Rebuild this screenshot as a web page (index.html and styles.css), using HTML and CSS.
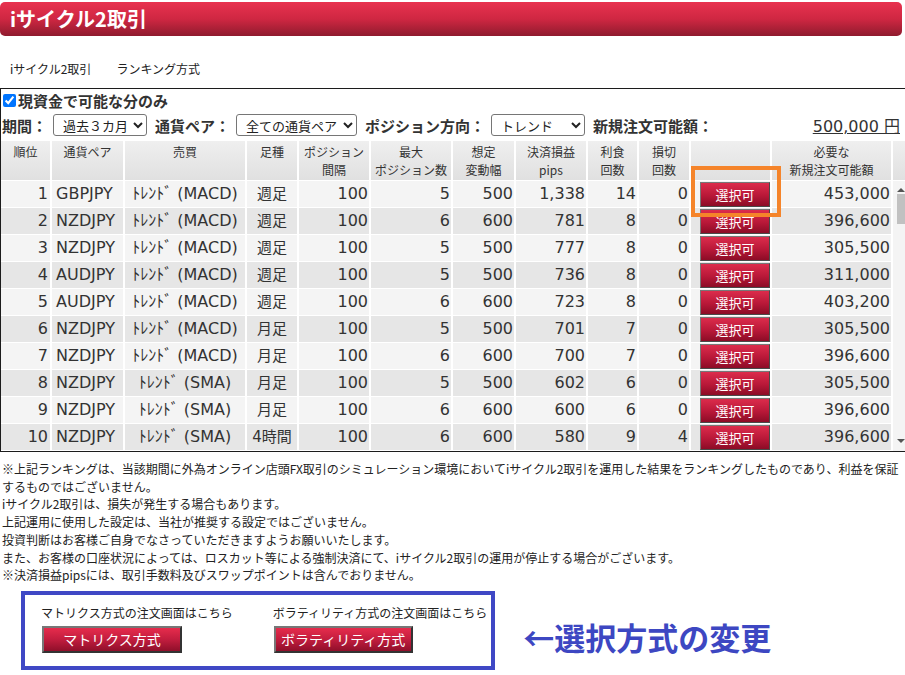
FILE: index.html
```html
<!DOCTYPE html>
<html lang="ja">
<head>
<meta charset="utf-8">
<title>iサイクル2取引</title>
<link rel="stylesheet" href="styles.css">
</head>
<body>
<header class="title-bar"><h1>iサイクル2取引</h1></header>
<nav class="tabs"><span>iサイクル2取引</span><span>ランキング方式</span></nav>

<section class="panel">
  <label class="only-cash"><input type="checkbox" checked>現資金で可能な分のみ</label>
  <div class="filters">
    <span>期間：</span>
    <select class="sel-period"><option>過去３カ月</option></select>
    <span>通貨ペア：</span>
    <select class="sel-pair"><option>全ての通貨ペア</option></select>
    <span>ポジション方向：</span>
    <select class="sel-dir"><option>トレンド</option></select>
    <span>新規注文可能額：</span>
    <span class="amount">500,000 円</span>
  </div>

  <table class="ranking">
    <thead>
      <tr>
        <th class="w-rank">順位</th>
        <th class="w-pair">通貨ペア</th>
        <th class="w-side">売買</th>
        <th class="w-bar">足種</th>
        <th class="w-int">ポジション<br>間隔</th>
        <th class="w-max">最大<br>ポジション数</th>
        <th class="w-range">想定<br>変動幅</th>
        <th class="w-pips">決済損益<br>pips</th>
        <th class="w-tp">利食<br>回数</th>
        <th class="w-sl">損切<br>回数</th>
        <th class="w-btn"></th>
        <th class="w-need">必要な<br>新規注文可能額</th>
        <th class="w-scroll"></th>
      </tr>
    </thead>
    <tbody>
      <tr>
        <td class="rank">1</td><td class="pair">GBPJPY</td><td class="side">ﾄﾚﾝﾄﾞ (MACD)</td><td class="bar">週足</td>
        <td>100</td><td>5</td><td>500</td><td>1,338</td><td>14</td><td>0</td>
        <td class="sel"><button class="pick">選択可</button></td><td>453,000</td>
        <td class="scroll" rowspan="10"><div class="sb"><span class="sb-up"></span><span class="sb-thumb"></span><span class="sb-down"></span></div></td>
      </tr>
      <tr>
        <td class="rank">2</td><td class="pair">NZDJPY</td><td class="side">ﾄﾚﾝﾄﾞ (MACD)</td><td class="bar">週足</td>
        <td>100</td><td>6</td><td>600</td><td>781</td><td>8</td><td>0</td>
        <td class="sel"><button class="pick">選択可</button></td><td>396,600</td>
      </tr>
      <tr>
        <td class="rank">3</td><td class="pair">NZDJPY</td><td class="side">ﾄﾚﾝﾄﾞ (MACD)</td><td class="bar">週足</td>
        <td>100</td><td>5</td><td>500</td><td>777</td><td>8</td><td>0</td>
        <td class="sel"><button class="pick">選択可</button></td><td>305,500</td>
      </tr>
      <tr>
        <td class="rank">4</td><td class="pair">AUDJPY</td><td class="side">ﾄﾚﾝﾄﾞ (MACD)</td><td class="bar">週足</td>
        <td>100</td><td>5</td><td>500</td><td>736</td><td>8</td><td>0</td>
        <td class="sel"><button class="pick">選択可</button></td><td>311,000</td>
      </tr>
      <tr>
        <td class="rank">5</td><td class="pair">AUDJPY</td><td class="side">ﾄﾚﾝﾄﾞ (MACD)</td><td class="bar">週足</td>
        <td>100</td><td>6</td><td>600</td><td>723</td><td>8</td><td>0</td>
        <td class="sel"><button class="pick">選択可</button></td><td>403,200</td>
      </tr>
      <tr>
        <td class="rank">6</td><td class="pair">NZDJPY</td><td class="side">ﾄﾚﾝﾄﾞ (MACD)</td><td class="bar">月足</td>
        <td>100</td><td>5</td><td>500</td><td>701</td><td>7</td><td>0</td>
        <td class="sel"><button class="pick">選択可</button></td><td>305,500</td>
      </tr>
      <tr>
        <td class="rank">7</td><td class="pair">NZDJPY</td><td class="side">ﾄﾚﾝﾄﾞ (MACD)</td><td class="bar">月足</td>
        <td>100</td><td>6</td><td>600</td><td>700</td><td>7</td><td>0</td>
        <td class="sel"><button class="pick">選択可</button></td><td>396,600</td>
      </tr>
      <tr>
        <td class="rank">8</td><td class="pair">NZDJPY</td><td class="side">ﾄﾚﾝﾄﾞ (SMA)</td><td class="bar">月足</td>
        <td>100</td><td>5</td><td>500</td><td>602</td><td>6</td><td>0</td>
        <td class="sel"><button class="pick">選択可</button></td><td>305,500</td>
      </tr>
      <tr>
        <td class="rank">9</td><td class="pair">NZDJPY</td><td class="side">ﾄﾚﾝﾄﾞ (SMA)</td><td class="bar">月足</td>
        <td>100</td><td>6</td><td>600</td><td>600</td><td>6</td><td>0</td>
        <td class="sel"><button class="pick">選択可</button></td><td>396,600</td>
      </tr>
      <tr>
        <td class="rank">10</td><td class="pair">NZDJPY</td><td class="side">ﾄﾚﾝﾄﾞ (SMA)</td><td class="bar">4時間</td>
        <td>100</td><td>6</td><td>600</td><td>580</td><td>9</td><td>4</td>
        <td class="sel"><button class="pick">選択可</button></td><td>396,600</td>
      </tr>
    </tbody>
  </table>
  <div class="highlight"></div>
</section>

<div class="notes">
  <p>※上記ランキングは、当該期間に外為オンライン店頭FX取引のシミュレーション環境においてiサイクル2取引を運用した結果をランキングしたものであり、利益を保証するものではございません。</p>
  <p>iサイクル2取引は、損失が発生する場合もあります。</p>
  <p>上記運用に使用した設定は、当社が推奨する設定ではございません。</p>
  <p>投資判断はお客様ご自身でなさっていただきますようお願いいたします。</p>
  <p>また、お客様の口座状況によっては、ロスカット等による強制決済にて、iサイクル2取引の運用が停止する場合がございます。</p>
  <p>※決済損益pipsには、取引手数料及びスワップポイントは含んでおりません。</p>
</div>

<div class="switch-row">
  <div class="switch-box">
    <div class="switch-group">
      <div class="switch-label">マトリクス方式の注文画面はこちら</div>
      <button class="mode-btn w140">マトリクス方式</button>
    </div>
    <div class="switch-group">
      <div class="switch-label">ボラティリティ方式の注文画面はこちら</div>
      <button class="mode-btn w139">ボラティリティ方式</button>
    </div>
  </div>
  <div class="annotation">←選択方式の変更</div>
</div>
</body>
</html>
```

FILE: styles.css
```css
html, body {
  margin: 0;
  padding: 0;
  background: #fff;
}
body {
  width: 905px;
  overflow: hidden;
  font-family: "Noto Sans CJK JP", sans-serif;
  color: #333;
}

.title-bar {
  margin: 2px 3px 0 0;
  height: 34px;
  border-radius: 5px;
  background: linear-gradient(#e8324f, #cf2742 50%, #8f1b2e);
}
.title-bar h1 {
  margin: 0;
  padding-left: 10px;
  font-size: 20px;
  line-height: 34px;
  font-weight: 700;
  color: #fff;
}

.tabs {
  display: flex;
  gap: 25px;
  padding: 24px 0 10px 10px;
  font-size: 12px;
  line-height: 18px;
  color: #222;
}

.panel {
  position: relative;
  border: 1px solid #1c1c1c;
  border-right: 0;
}

.only-cash {
  display: flex;
  align-items: center;
  height: 22px;
  font-size: 15px;
  font-weight: 700;
  color: #333;
}
.only-cash input {
  width: 13px;
  height: 13px;
  margin: 0 2px 0 2px;
}

.filters {
  display: flex;
  align-items: center;
  height: 24px;
  margin: 2px 0 4px;
  padding-left: 1px;
  font-size: 15px;
  font-weight: 700;
  color: #333;
}
.filters select {
  height: 22px;
  margin: 0 8px 0 6px;
  padding: 0 0 0 5px;
  border: 1px solid #767676;
  border-radius: 3px;
  background: #fff;
  font-family: "Noto Sans CJK JP", sans-serif;
  font-size: 13px;
  color: #222;
}
.sel-period { width: 94px; }
.sel-pair { width: 121px; }
.sel-dir { width: 94px; }
.amount {
  margin-left: auto;
  padding-right: 5px;
  font-family: "DejaVu Sans", "Noto Sans CJK JP", sans-serif;
  font-weight: 400;
  font-size: 16px;
  text-decoration: underline;
  color: #333;
}

.ranking {
  width: 904px;
  table-layout: fixed;
  border-collapse: separate;
  border-spacing: 0;
}
.ranking th {
  box-sizing: border-box;
  height: 39px;
  padding: 2px 0 1px;
  vertical-align: top;
  text-align: center;
  font-size: 12px;
  font-weight: 400;
  line-height: 18px;
  color: #333;
  background: linear-gradient(#efefef, #e0e0e0);
  border-right: 2px solid #fff;
  border-bottom: 1px solid #fff;
  white-space: nowrap;
}
.w-rank { width: 51px; }
.w-pair { width: 73px; }
.w-side { width: 122px; }
.w-bar { width: 52px; }
.w-int { width: 72px; }
.w-max { width: 82px; }
.w-range { width: 63px; }
.w-pips { width: 72px; }
.w-tp { width: 51px; }
.w-sl { width: 52px; }
.w-btn { width: 81px; }
.w-need { width: 121px; }
.ranking th.w-scroll { width: 12px; border-right: 0; }

.ranking td {
  box-sizing: border-box;
  height: 27px;
  padding: 0 1px 0 0;
  text-align: right;
  vertical-align: middle;
  white-space: nowrap;
  font-family: "DejaVu Sans", "Noto Sans CJK JP", sans-serif;
  font-size: 16px;
  line-height: 20px;
  color: #333;
  border-right: 2px solid #fff;
  border-bottom: 1px solid #fff;
}
.ranking tbody tr:nth-child(odd) td { background: #f4f4f4; }
.ranking tbody tr:nth-child(even) td { background: #e6e6e6; }
.ranking td.rank { padding-right: 2px; }
.ranking td.pair { text-align: left; padding-left: 4px; }
.ranking td.side { text-align: center; padding: 0; }
.ranking td.bar { text-align: center; padding: 0; font-size: 15px; }
.ranking td.sel {
  padding: 1px 0 0 9px;
  vertical-align: top;
}
.ranking td.scroll {
  padding: 0;
  border: 0;
  vertical-align: top;
  background: #f6f6f6;
}

.pick {
  display: block;
  width: 70px;
  height: 25px;
  margin: 0;
  padding: 0;
  border: 1px solid #4a4a4a;
  border-top-color: #777;
  border-left-color: #777;
  background: linear-gradient(#dc2c4c, #b81838 55%, #8c0c26);
  color: #fff;
  font-family: "Noto Sans CJK JP", sans-serif;
  font-size: 13px;
  line-height: 22px;
}

.sb {
  display: flex;
  flex-direction: column;
  height: 270px;
}
.sb-up {
  width: 0;
  height: 0;
  margin: 7px 0 0 4px;
  border-left: 4px solid transparent;
  border-right: 4px solid transparent;
  border-bottom: 4px solid #555;
}
.sb-thumb {
  width: 8px;
  height: 30px;
  margin: 2px 0 0 4px;
  background: #c1c1c1;
}
.sb-down {
  width: 0;
  height: 0;
  margin: auto 0 8px 4px;
  border-left: 4px solid transparent;
  border-right: 4px solid transparent;
  border-top: 4px solid #555;
}

.highlight {
  position: absolute;
  left: 690px;
  top: 77px;
  width: 90px;
  height: 51px;
  box-sizing: border-box;
  border: 4px solid #f5842a;
}

.notes {
  width: 899px;
  margin-top: 8px;
  padding-left: 2px;
  font-size: 12px;
  line-height: 17.7px;
  color: #222;
}
.notes p { margin: 0; }

.switch-row {
  display: flex;
  align-items: center;
  margin-top: 7px;
  padding-left: 21px;
}
.switch-box {
  display: flex;
  gap: 40px;
  padding: 9px 4px 13px 16px;
  border: 4px solid #3f48c5;
}
.switch-label {
  font-size: 12px;
  line-height: 18px;
  color: #222;
}
.mode-btn {
  display: block;
  height: 27px;
  margin: 4px 0 0 1px;
  padding: 0;
  border: 2px solid;
  border-color: #777 #333 #333 #777;
  background: linear-gradient(#e62c4c, #c21d3e 50%, #8f0f2a);
  color: #fff;
  font-family: "Noto Sans CJK JP", sans-serif;
  font-size: 14px;
  line-height: 22px;
}
.w140 { width: 140px; }
.w139 { width: 139px; }

.annotation {
  margin: 13px 0 0 28px;
  font-size: 31px;
  font-weight: 700;
  line-height: 40px;
  color: #3d47c2;
}
```
